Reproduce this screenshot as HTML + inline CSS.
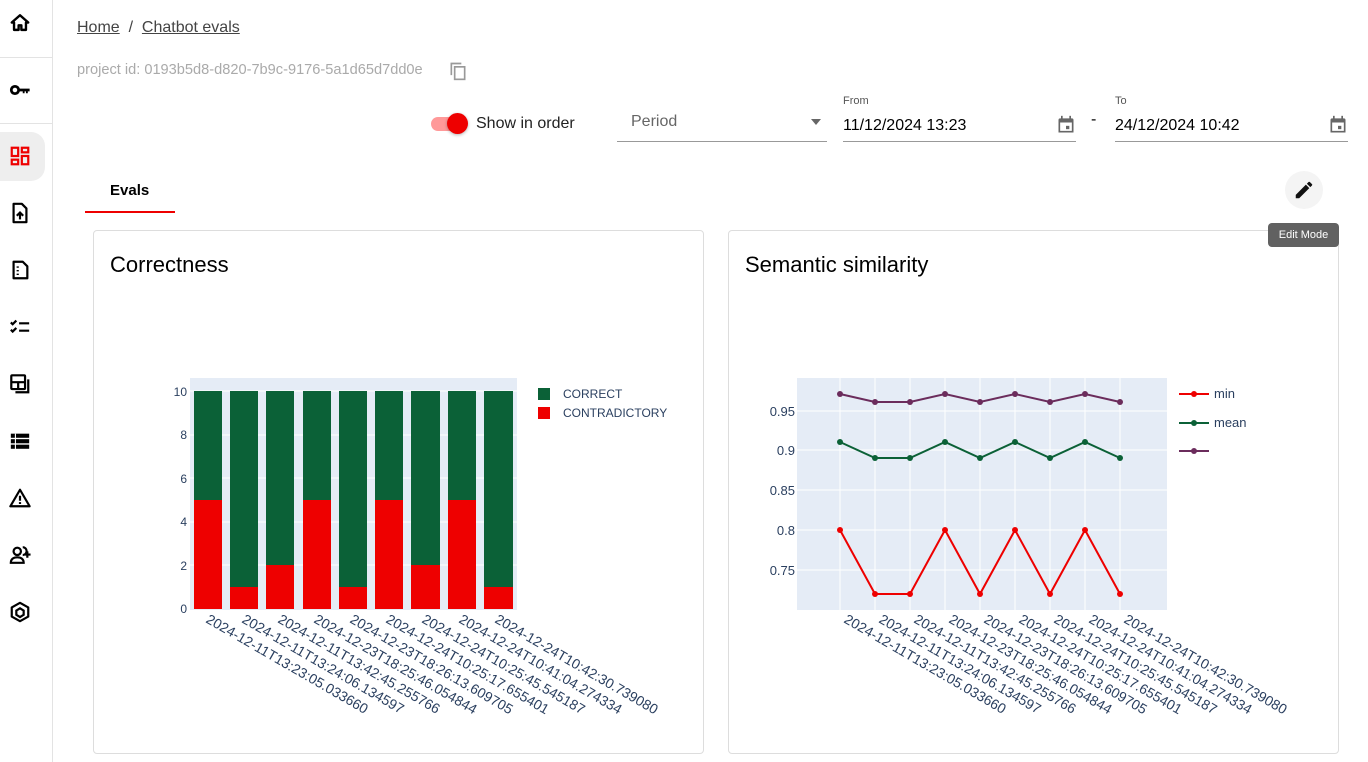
<!DOCTYPE html>
<html><head><meta charset="utf-8"><style>
*{box-sizing:border-box;margin:0;padding:0}
body{width:1368px;height:762px;overflow:hidden;background:#fff;font-family:"Liberation Sans",sans-serif;position:relative;color:#000}
.abs{position:absolute}
.side{left:0;top:0;width:53px;height:762px;border-right:1px solid #e3e3e3}
.ic{position:absolute;left:9px;width:22px;height:22px}
.card{border:1px solid #ddd;border-radius:4px;background:#fff}
.lbl{font-size:12px;color:#555}
.ul{border-bottom:1px solid #999}
</style></head><body>
<div class="abs side">
 <div class="abs" style="left:0;top:57px;width:52px;border-top:1px solid #e3e3e3"></div>
 <div class="abs" style="left:0;top:123px;width:52px;border-top:1px solid #e3e3e3"></div>
 <div class="abs" style="left:0;top:132px;width:45px;height:49px;background:#eee;border-radius:0 14px 14px 0"></div>
 <svg class="ic" style="top:12px" viewBox="0 0 24 24"><path d="M12 3.5L3 11.5h2.5v8h5v-5h3v5h5v-8H21z" fill="none" stroke="#000" stroke-width="2.6" stroke-linejoin="round"/></svg>
 <svg class="ic" style="top:79px" viewBox="0 0 24 24"><circle cx="6.5" cy="12" r="4" fill="none" stroke="#000" stroke-width="3"/><path d="M10 10.5h12.5v3h-2v2h-2v-2h-1.5v2h-2v-2H10z" fill="#000"/></svg>
 <svg class="ic" style="top:145px" viewBox="0 0 24 24" fill="none" stroke="#e00" stroke-width="2.4"><rect x="3" y="3" width="7" height="9"/><rect x="14" y="3" width="7" height="5"/><rect x="14" y="12" width="7" height="9"/><rect x="3" y="16" width="7" height="5"/></svg>
 <svg class="ic" style="top:202px" viewBox="0 0 24 24" fill="none" stroke="#000" stroke-width="2.4"><path d="M5 2h9l5 5v15H5z" stroke-linejoin="round"/><path d="M12 19v-7" /><path d="M8.5 15l3.5-3.5 3.5 3.5" /></svg>
 <svg class="ic" style="top:259px" viewBox="0 0 24 24" fill="none" stroke="#000" stroke-width="2.4"><path d="M5 3h10l5 5v13H5z" stroke-linejoin="round"/><path d="M9.5 8v1.5M9.5 12v1.5M9.5 16v1.5"/></svg>
 <svg class="ic" style="top:316px" viewBox="0 0 24 24" fill="none" stroke="#000" stroke-width="2.4"><path d="M2 7l2 2 4-4M2 15l2 2 4-4M11 8h11M11 16h11"/></svg>
 <svg class="ic" style="top:373px" viewBox="0 0 24 24" fill="none" stroke="#000" stroke-width="2.4"><rect x="2.5" y="2.5" width="15" height="15" rx="1"/><path d="M2.5 10h15M10 10v7.5M21 7v14H7"/></svg>
 <svg class="ic" style="top:430px" viewBox="0 0 24 24" fill="#000"><rect x="2" y="4" width="20" height="4.5"/><rect x="2" y="10" width="20" height="4.5"/><rect x="2" y="16" width="20" height="4.5"/><path d="M7 4v17" stroke="#fff" stroke-width="1.2"/></svg>
 <svg class="ic" style="top:487px" viewBox="0 0 24 24" fill="none" stroke="#000" stroke-width="2.4"><path d="M12 3L1.5 21h21z" stroke-linejoin="round"/><path d="M12 9.5v5.5M12 16.5v2"/></svg>
 <svg class="ic" style="top:544px" viewBox="0 0 24 24" fill="none" stroke="#000" stroke-width="2.4"><circle cx="9" cy="8" r="4"/><path d="M2 20.5c0-4 3-6 7-6s7 2 7 6zM15 3.5a4 4 0 0 1 0 8.5M20 8v7M16.5 11.5h7"/></svg>
 <svg class="ic" style="top:601px" viewBox="0 0 24 24" fill="none" stroke="#000" stroke-width="2.4"><path d="M12 2l9 5v10l-9 5-9-5V7z" stroke-linejoin="round"/><path d="M12 8l4 2.5v4.5l-4 2.5-4-2.5v-4.5z"/></svg>
</div>

<div class="abs" style="left:77px;top:19px;font-size:16px;color:#444"><span style="text-decoration:underline">Home</span>&nbsp; / &nbsp;<span style="text-decoration:underline">Chatbot evals</span></div>
<div class="abs" style="left:77px;top:62px;font-size:14.6px;color:#aaa">project id: 0193b5d8-d820-7b9c-9176-5a1d65d7dd0e</div>
<svg class="abs" style="left:448px;top:61px" width="20" height="20" viewBox="0 0 24 24" fill="none" stroke="#999" stroke-width="2"><rect x="8" y="7" width="12" height="15"/><path d="M4 17V3h12"/></svg>

<div class="abs" style="left:431px;top:117px;width:34px;height:14px;border-radius:7px;background:#f99"></div>
<div class="abs" style="left:447px;top:113px;width:21px;height:21px;border-radius:50%;background:#e00;box-shadow:0 1px 3px rgba(0,0,0,.3)"></div>
<div class="abs" style="left:476px;top:115px;font-size:16px;color:#222">Show in order</div>
<div class="abs ul" style="left:617px;top:105px;width:210px;height:37px"><span class="abs" style="left:14px;top:8px;font-size:16px;color:#666">Period</span><span class="abs" style="right:6px;top:14px;border:5px solid transparent;border-top:6px solid #666"></span></div>
<div class="abs lbl" style="left:843px;top:95px;font-size:11px">From</div>
<div class="abs ul" style="left:843px;top:110px;width:233px;height:32px"><span class="abs" style="left:0;top:7px;font-size:16px">11/12/2024 13:23</span>
<svg class="abs" style="right:0;top:4px" width="20" height="22" viewBox="0 0 24 24" fill="#666"><path d="M5 4h14a2 2 0 0 1 2 2v15H3V6a2 2 0 0 1 2-2zM5 9v10h14V9z"/><rect x="6" y="1" width="2" height="5"/><rect x="16" y="1" width="2" height="5"/><rect x="12" y="13" width="4" height="4"/></svg></div>
<div class="abs" style="left:1091px;top:111px;font-size:16px">-</div>
<div class="abs lbl" style="left:1115px;top:95px;font-size:11px">To</div>
<div class="abs ul" style="left:1115px;top:110px;width:233px;height:32px"><span class="abs" style="left:0;top:7px;font-size:16px">24/12/2024 10:42</span>
<svg class="abs" style="right:0;top:4px" width="20" height="22" viewBox="0 0 24 24" fill="#666"><path d="M5 4h14a2 2 0 0 1 2 2v15H3V6a2 2 0 0 1 2-2zM5 9v10h14V9z"/><rect x="6" y="1" width="2" height="5"/><rect x="16" y="1" width="2" height="5"/><rect x="12" y="13" width="4" height="4"/></svg></div>

<div class="abs" style="left:110px;top:182px;font-size:15px;font-weight:bold">Evals</div>
<div class="abs" style="left:85px;top:211px;width:90px;height:2px;background:#e00"></div>

<div class="abs" style="left:1285px;top:171px;width:38px;height:38px;border-radius:50%;background:#f4f4f4"></div>
<svg class="abs" style="left:1293px;top:179px" width="22" height="22" viewBox="0 0 24 24"><path d="M3 17.25V21h3.75L17.8 9.94l-3.75-3.75zM20.7 7.04a1 1 0 0 0 0-1.41l-2.34-2.34a1 1 0 0 0-1.41 0l-1.83 1.83 3.75 3.75z" fill="#111"/></svg>

<div class="abs card" style="left:93px;top:230px;width:611px;height:524px"></div>
<div class="abs card" style="left:728px;top:230px;width:611px;height:524px"></div>
<div class="abs" style="left:110px;top:252px;font-size:22px">Correctness</div>
<div class="abs" style="left:745px;top:252px;font-size:22px">Semantic similarity</div>
<div class="abs" style="left:1268px;top:223px;width:71px;height:24px;background:#616161;border-radius:4px;color:#fff;font-size:11px;text-align:center;line-height:24px">Edit Mode</div>

<svg class="abs" style="left:0;top:0" width="1368" height="762" font-family="Liberation Sans, sans-serif" font-size="12" fill="#2a3f5f">
 <rect x="190" y="378" width="327" height="232" fill="#e5ecf6"/>
 <g stroke="#fff" stroke-width="1"><line x1="190" y1="391" x2="517" y2="391"/><line x1="190" y1="435" x2="517" y2="435"/><line x1="190" y1="478" x2="517" y2="478"/><line x1="190" y1="522" x2="517" y2="522"/><line x1="190" y1="565" x2="517" y2="565"/></g>
 <g text-anchor="end" font-size="12"><text x="187" y="396">10</text><text x="187" y="439">8</text><text x="187" y="483">6</text><text x="187" y="526">4</text><text x="187" y="570">2</text><text x="187" y="613">0</text></g>
 <g>
  <rect x="194" y="391" width="28" height="109" fill="#0b6137"/><rect x="194" y="500" width="28" height="109" fill="#e00"/>
  <rect x="230" y="391" width="28" height="196" fill="#0b6137"/><rect x="230" y="587" width="28" height="22" fill="#e00"/>
  <rect x="266" y="391" width="28" height="174" fill="#0b6137"/><rect x="266" y="565" width="28" height="44" fill="#e00"/>
  <rect x="303" y="391" width="28" height="109" fill="#0b6137"/><rect x="303" y="500" width="28" height="109" fill="#e00"/>
  <rect x="339" y="391" width="28" height="196" fill="#0b6137"/><rect x="339" y="587" width="28" height="22" fill="#e00"/>
  <rect x="375" y="391" width="28" height="109" fill="#0b6137"/><rect x="375" y="500" width="28" height="109" fill="#e00"/>
  <rect x="411" y="391" width="29" height="174" fill="#0b6137"/><rect x="411" y="565" width="29" height="44" fill="#e00"/>
  <rect x="448" y="391" width="28" height="109" fill="#0b6137"/><rect x="448" y="500" width="28" height="109" fill="#e00"/>
  <rect x="484" y="391" width="29" height="196" fill="#0b6137"/><rect x="484" y="587" width="29" height="22" fill="#e00"/>
 </g>
 <rect x="538" y="388" width="12" height="12" fill="#0b6137"/><text x="563" y="398">CORRECT</text>
 <rect x="538" y="407" width="12" height="12" fill="#e00"/><text x="563" y="417">CONTRADICTORY</text>
 <g font-size="14">
  <text transform="translate(205,622) rotate(30)">2024-12-11T13:23:05.033660</text>
  <text transform="translate(241,622) rotate(30)">2024-12-11T13:24:06.134597</text>
  <text transform="translate(277,622) rotate(30)">2024-12-11T13:42:45.255766</text>
  <text transform="translate(313,622) rotate(30)">2024-12-23T18:25:46.054844</text>
  <text transform="translate(349,622) rotate(30)">2024-12-23T18:26:13.609705</text>
  <text transform="translate(385,622) rotate(30)">2024-12-24T10:25:17.655401</text>
  <text transform="translate(421,622) rotate(30)">2024-12-24T10:25:45.545187</text>
  <text transform="translate(458,622) rotate(30)">2024-12-24T10:41:04.274334</text>
  <text transform="translate(494,622) rotate(30)">2024-12-24T10:42:30.739080</text>
 </g>

 <rect x="797" y="378" width="370" height="232" fill="#e5ecf6"/>
 <g stroke="#fff" stroke-width="1"><line x1="797" y1="411" x2="1167" y2="411"/><line x1="797" y1="450" x2="1167" y2="450"/><line x1="797" y1="490" x2="1167" y2="490"/><line x1="797" y1="530" x2="1167" y2="530"/><line x1="797" y1="570" x2="1167" y2="570"/>
 <line x1="840" y1="378" x2="840" y2="610"/><line x1="875" y1="378" x2="875" y2="610"/><line x1="910" y1="378" x2="910" y2="610"/><line x1="945" y1="378" x2="945" y2="610"/><line x1="980" y1="378" x2="980" y2="610"/><line x1="1015" y1="378" x2="1015" y2="610"/><line x1="1050" y1="378" x2="1050" y2="610"/><line x1="1085" y1="378" x2="1085" y2="610"/><line x1="1120" y1="378" x2="1120" y2="610"/></g>
 <g text-anchor="end" font-size="13"><text x="795" y="416">0.95</text><text x="795" y="455">0.9</text><text x="795" y="495">0.85</text><text x="795" y="535">0.8</text><text x="795" y="575">0.75</text></g>
 <g fill="none" stroke-width="2">
  <polyline stroke="#6b2c5c" points="840,394 875,402 910,402 945,394 980,402 1015,394 1050,402 1085,394 1120,402"/>
  <polyline stroke="#0b6137" points="840,442 875,458 910,458 945,442 980,458 1015,442 1050,458 1085,442 1120,458"/>
  <polyline stroke="#e00" points="840,530 875,594 910,594 945,530 980,594 1015,530 1050,594 1085,530 1120,594"/>
 </g>
 <g fill="#6b2c5c"><circle cx="840" cy="394" r="3"/><circle cx="875" cy="402" r="3"/><circle cx="910" cy="402" r="3"/><circle cx="945" cy="394" r="3"/><circle cx="980" cy="402" r="3"/><circle cx="1015" cy="394" r="3"/><circle cx="1050" cy="402" r="3"/><circle cx="1085" cy="394" r="3"/><circle cx="1120" cy="402" r="3"/></g>
 <g fill="#0b6137"><circle cx="840" cy="442" r="3"/><circle cx="875" cy="458" r="3"/><circle cx="910" cy="458" r="3"/><circle cx="945" cy="442" r="3"/><circle cx="980" cy="458" r="3"/><circle cx="1015" cy="442" r="3"/><circle cx="1050" cy="458" r="3"/><circle cx="1085" cy="442" r="3"/><circle cx="1120" cy="458" r="3"/></g>
 <g fill="#e00"><circle cx="840" cy="530" r="3"/><circle cx="875" cy="594" r="3"/><circle cx="910" cy="594" r="3"/><circle cx="945" cy="530" r="3"/><circle cx="980" cy="594" r="3"/><circle cx="1015" cy="530" r="3"/><circle cx="1050" cy="594" r="3"/><circle cx="1085" cy="530" r="3"/><circle cx="1120" cy="594" r="3"/></g>
 <line x1="1179" y1="394" x2="1209" y2="394" stroke="#e00" stroke-width="2"/><circle cx="1194" cy="394" r="3" fill="#e00"/><text x="1214" y="398" font-size="13">min</text>
 <line x1="1179" y1="423" x2="1209" y2="423" stroke="#0b6137" stroke-width="2"/><circle cx="1194" cy="423" r="3" fill="#0b6137"/><text x="1214" y="427" font-size="13">mean</text>
 <line x1="1179" y1="451" x2="1209" y2="451" stroke="#6b2c5c" stroke-width="2"/><circle cx="1194" cy="451" r="3" fill="#6b2c5c"/>
 <g font-size="14">
  <text transform="translate(843,622) rotate(30)">2024-12-11T13:23:05.033660</text>
  <text transform="translate(878,622) rotate(30)">2024-12-11T13:24:06.134597</text>
  <text transform="translate(913,622) rotate(30)">2024-12-11T13:42:45.255766</text>
  <text transform="translate(948,622) rotate(30)">2024-12-23T18:25:46.054844</text>
  <text transform="translate(983,622) rotate(30)">2024-12-23T18:26:13.609705</text>
  <text transform="translate(1018,622) rotate(30)">2024-12-24T10:25:17.655401</text>
  <text transform="translate(1053,622) rotate(30)">2024-12-24T10:25:45.545187</text>
  <text transform="translate(1088,622) rotate(30)">2024-12-24T10:41:04.274334</text>
  <text transform="translate(1123,622) rotate(30)">2024-12-24T10:42:30.739080</text>
 </g>
</svg>
</body></html>
